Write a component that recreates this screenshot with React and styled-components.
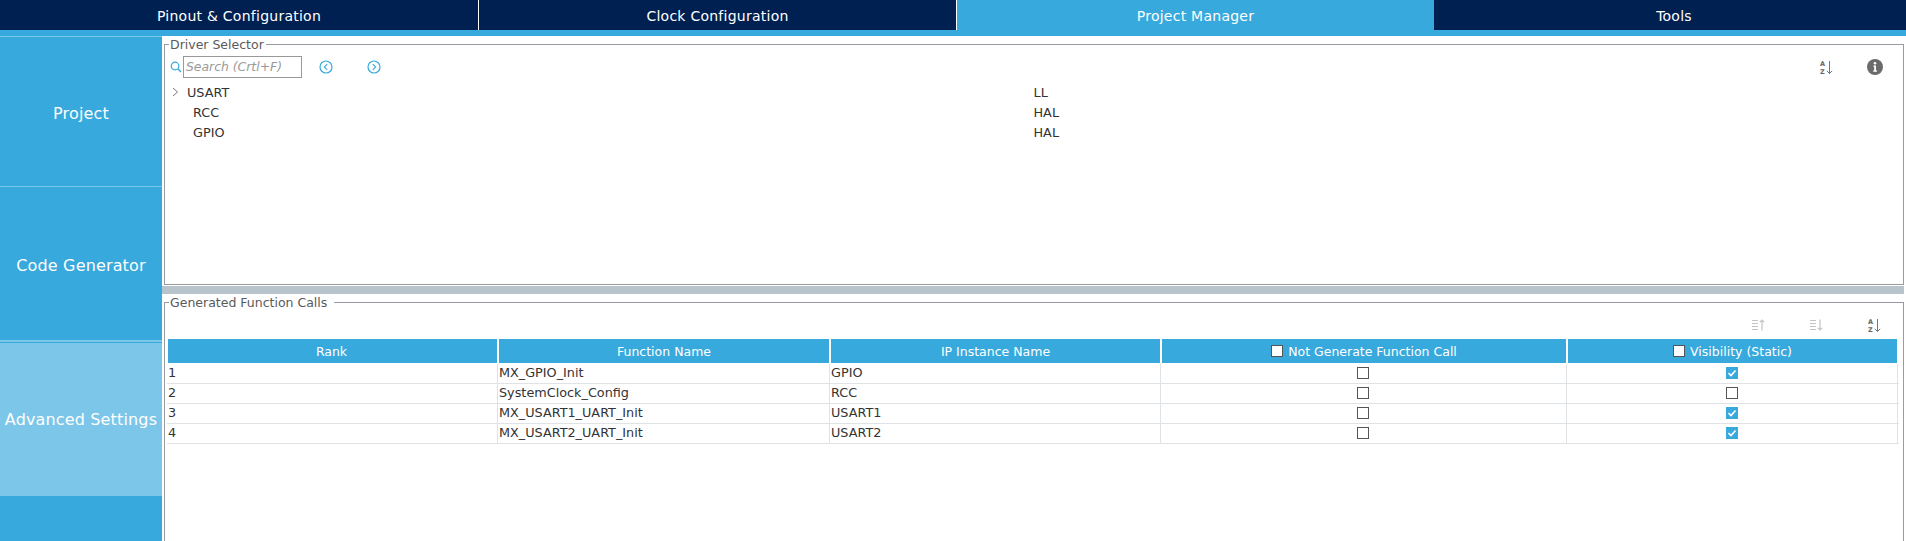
import React from "react"
import styled, { createGlobalStyle } from "styled-components"

const BLUE = "#38a9dc"
const NAVY = "#002052"

const Global = createGlobalStyle`
  html, body { margin: 0; padding: 0; background: #fff; }
  body { font-family: "DejaVu Sans", Verdana, sans-serif; overflow: hidden; }
`

const Page = styled.div`
  width: 1906px;
  height: 541px;
  display: flex;
  flex-direction: column;
  overflow: hidden;
`

const TopBar = styled.div`
  display: grid;
  grid-template-columns: 479px 478px 477px 472px;
  height: 36px;
  background: ${BLUE};
  flex: none;
`

const Tab = styled.div`
  height: ${({ active }) => (active ? "36px" : "30px")};
  background: ${({ active }) => (active ? BLUE : NAVY)};
  border-right: ${({ active, last }) => (active || last ? "none" : "1px solid #fff")};
  padding: ${({ last }) => (last ? "1px 0 0 8px" : "1px 0 0")};
  color: #fff;
  font-size: 14px;
  letter-spacing: 0.25px;
  line-height: 30px;
  text-align: center;
  box-sizing: border-box;
`

const Body = styled.div`
  flex: 1;
  display: flex;
  min-height: 0;
`

const Sidebar = styled.div`
  width: 162px;
  flex: none;
  background: ${BLUE};
  border-top: 1px solid #7cc6e9;
`

const SideItem = styled.div`
  height: ${({ h }) => h}px;
  box-sizing: border-box;
  display: flex;
  align-items: center;
  justify-content: center;
  padding-top: ${({ nudge }) => nudge || 0}px;
  color: #fff;
  font-size: 16px;
  letter-spacing: 0.15px;
  white-space: nowrap;
  background: ${({ active }) => (active ? "#7cc6e9" : BLUE)};
  border-bottom: ${({ line }) => (line ? `${line}px solid #7cc6e9` : "none")};
`

const Main = styled.div`
  flex: 1;
  min-width: 0;
  display: flex;
  flex-direction: column;
`

const TopPane = styled.div`
  height: 250px;
  flex: none;
  padding: 1px 2.5px 0 2px;
  box-sizing: border-box;
`

const Splitter = styled.div`
  height: 8px;
  flex: none;
  background: #b8c4cb;
  margin-right: 2px;
`

const BottomPane = styled.div`
  flex: 1;
  padding: 1px 2.5px 0 2px;
  min-height: 0;
`

const Group = styled.fieldset`
  margin: 0;
  padding: 0;
  height: ${({ h }) => h}px;
  box-sizing: border-box;
  border: 1.5px solid #969ca1;
  min-width: 0;
`

const Legend = styled.legend`
  position: relative;
  top: 1px;
  margin-left: 4px;
  padding: 0 ${({ pad }) => pad || 1}px 0 1px;
  font-size: 12.5px;
  color: #5a5a5a;
  line-height: 14px;
`

const SearchRow = styled.div`
  display: flex;
  align-items: center;
  height: 22px;
  margin-top: 5px;
  padding: 0 20px 0 5px;
`

const SearchInput = styled.div`
  width: 119px;
  height: 22px;
  box-sizing: border-box;
  border: 1px solid #999;
  margin-left: 1px;
  padding-left: 2px;
  color: #9a9a9a;
  font-size: 12.4px;
  font-style: italic;
  line-height: 20px;
  white-space: nowrap;
  overflow: hidden;
`

const NavButton = styled.svg`
  width: 14px;
  height: 14px;
  margin-left: ${({ gap }) => gap}px;
  flex: none;
`

const Spacer = styled.div`
  flex: 1;
`

const IconSlot = styled.svg`
  flex: none;
  margin-left: ${({ gap }) => gap || 0}px;
`

const Tree = styled.div`
  margin-top: 4px;
`

const TreeRow = styled.div`
  display: grid;
  grid-template-columns: 868.5px 1fr;
  height: 20px;
  align-items: center;
  font-size: 12.8px;
  color: #333;
  position: relative;
`

const TreeName = styled.span`
  padding-left: ${({ indent }) => indent}px;
`

const Chevron = styled.svg`
  position: absolute;
  left: 7px;
  top: 5px;
  width: 7px;
  height: 10px;
`

const SortBar = styled.div`
  display: flex;
  justify-content: flex-end;
  align-items: center;
  height: 18px;
  margin-top: 7px;
  padding-right: 21px;
`

const Table = styled.div`
  margin: 5px 0 0 2px;
  width: 1732px;
`

const COLS = "331px 332px 331px 406px 331px"

const HeadRow = styled.div`
  display: grid;
  grid-template-columns: ${COLS};
  height: 24px;
  padding-left: 1px;
`

const HeadCell = styled.div`
  background: ${BLUE};
  border-right: 2px solid #fff;
  color: #fff;
  font-size: 12.5px;
  display: flex;
  align-items: center;
  justify-content: center;
  gap: 5px;
  padding-right: ${({ tight }) => (tight ? 2 : 0)}px;
`

const Rows = styled.div`
  padding-top: 1px;
`

const Row = styled.div`
  display: grid;
  grid-template-columns: ${COLS};
  height: 20px;
  box-sizing: border-box;
  border-bottom: 1px solid #e0e3e6;
`

const Cell = styled.div`
  border-right: 1px solid #e0e3e6;
  font-size: 12.8px;
  color: #333;
  padding: ${({ center }) => (center ? "3px 2px 0 1px" : "0 0 0 1px")};
  line-height: 18px;
  white-space: nowrap;
  display: ${({ center }) => (center ? "flex" : "block")};
  align-items: flex-start;
  justify-content: center;
`

const Box = styled.span`
  width: 12px;
  height: 12px;
  box-sizing: border-box;
  display: inline-flex;
  flex: none;
  align-items: center;
  justify-content: center;
  background: ${({ checked }) => (checked ? BLUE : "#fff")};
  border: ${({ checked }) => (checked ? "none" : "1px solid #555")};
`

const Check = () => (
  <Box checked>
    <svg width="10" height="10" viewBox="0 0 10 10">
      <path d="M1.5 5.2 L4 7.6 L8.5 2.4" fill="none" stroke="#fff" strokeWidth="1.6" />
    </svg>
  </Box>
)

const Search = () => (
  <svg width="12" height="12" viewBox="0 0 12 12">
    <circle cx="5" cy="5" r="3.8" fill="none" stroke={BLUE} strokeWidth="1.2" />
    <path d="M7.8 7.8 L11 11" stroke={BLUE} strokeWidth="1.5" />
  </svg>
)

const Nav = ({ dir, gap }) => (
  <NavButton gap={gap} viewBox="0 0 14 14">
    <circle cx="7" cy="7" r="6" fill="none" stroke={BLUE} strokeWidth="1.2" />
    <path d={dir === "left" ? "M8.2 4.2 L5.4 7 L8.2 9.8" : "M5.8 4.2 L8.6 7 L5.8 9.8"} fill="none" stroke={BLUE} strokeWidth="1.1" />
  </NavButton>
)

const SortAz = ({ gap }) => (
  <IconSlot gap={gap} width="14" height="15" viewBox="0 0 14 15">
    <text x="0" y="6" fontSize="6.5" fontWeight="bold" fill="#666">A</text>
    <text x="0" y="14" fontSize="6.5" fontWeight="bold" fill="#666">Z</text>
    <path d="M9.5 1 V13.5 M6.8 10.8 L9.5 13.5 L12.2 10.8" fill="none" stroke="#777" strokeWidth="1" />
  </IconSlot>
)

const SortList = ({ up, gap }) => (
  <IconSlot gap={gap} width="13" height="12" viewBox="0 0 13 12">
    <path d="M0 1.5 H6 M0 4.5 H6 M0 7.5 H6 M0 10.5 H6" stroke="#c4c4c4" strokeWidth="1" />
    <path d={up ? "M10 11.5 V1 M7.8 3.2 L10 1 L12.2 3.2" : "M10 0.5 V11 M7.8 8.8 L10 11 L12.2 8.8"} fill="none" stroke="#c4c4c4" strokeWidth="1.2" />
  </IconSlot>
)

const Info = ({ gap }) => (
  <IconSlot gap={gap} width="16" height="16" viewBox="0 0 16 16">
    <circle cx="8" cy="8" r="8" fill="#6b6b6b" />
    <circle cx="8" cy="4.2" r="1.3" fill="#fff" />
    <path d="M6.4 6.6 H9 V11.6 H10 V12.8 H6.2 V11.6 H7.2 V7.8 H6.4 Z" fill="#fff" />
  </IconSlot>
)

const calls = [
  ["1", "MX_GPIO_Init", "GPIO", true],
  ["2", "SystemClock_Config", "RCC", false],
  ["3", "MX_USART1_UART_Init", "USART1", true],
  ["4", "MX_USART2_UART_Init", "USART2", true],
]

export default function App() {
  return (
    <Page>
      <Global />
      <TopBar>
        <Tab>Pinout &amp; Configuration</Tab>
        <Tab>Clock Configuration</Tab>
        <Tab active>Project Manager</Tab>
        <Tab last>Tools</Tab>
      </TopBar>
      <Body>
        <Sidebar>
          <SideItem h={150} line={1} nudge={3}>Project</SideItem>
          <SideItem h={155} line={2} nudge={4}>Code Generator</SideItem>
          <SideItem h={1} />
          <SideItem h={153} active>Advanced Settings</SideItem>
        </Sidebar>
        <Main>
          <TopPane>
            <Group h={248}>
              <Legend pad={2}>Driver Selector</Legend>
              <SearchRow>
                <Search />
                <SearchInput>Search (Crtl+F)</SearchInput>
                <Nav dir="left" gap={17} />
                <Nav dir="right" gap={33.5} />
                <Spacer />
                <SortAz />
                <Info gap={33} />
              </SearchRow>
              <Tree>
                <TreeRow>
                  <Chevron viewBox="0 0 7 10">
                    <path d="M1 1 L5.5 5 L1 9" fill="none" stroke="#777" strokeWidth="1" />
                  </Chevron>
                  <TreeName indent={22}>USART</TreeName>
                  <span>LL</span>
                </TreeRow>
                <TreeRow>
                  <TreeName indent={28}>RCC</TreeName>
                  <span>HAL</span>
                </TreeRow>
                <TreeRow>
                  <TreeName indent={28}>GPIO</TreeName>
                  <span>HAL</span>
                </TreeRow>
              </Tree>
            </Group>
          </TopPane>
          <Splitter />
          <BottomPane>
            <Group h={300}>
              <Legend pad={7}>Generated Function Calls</Legend>
              <SortBar>
                <SortList up />
                <SortList gap={45} />
                <SortAz gap={45} />
              </SortBar>
              <Table>
                <HeadRow>
                  <HeadCell tight>Rank</HeadCell>
                  <HeadCell>Function Name</HeadCell>
                  <HeadCell>IP Instance Name</HeadCell>
                  <HeadCell><Box />Not Generate Function Call</HeadCell>
                  <HeadCell><Box />Visibility (Static)</HeadCell>
                </HeadRow>
                <Rows>
                  {calls.map(([rank, name, ip, visible]) => (
                    <Row key={rank}>
                      <Cell>{rank}</Cell>
                      <Cell>{name}</Cell>
                      <Cell>{ip}</Cell>
                      <Cell center><Box /></Cell>
                      <Cell center>{visible ? <Check /> : <Box />}</Cell>
                    </Row>
                  ))}
                </Rows>
              </Table>
            </Group>
          </BottomPane>
        </Main>
      </Body>
    </Page>
  )
}
